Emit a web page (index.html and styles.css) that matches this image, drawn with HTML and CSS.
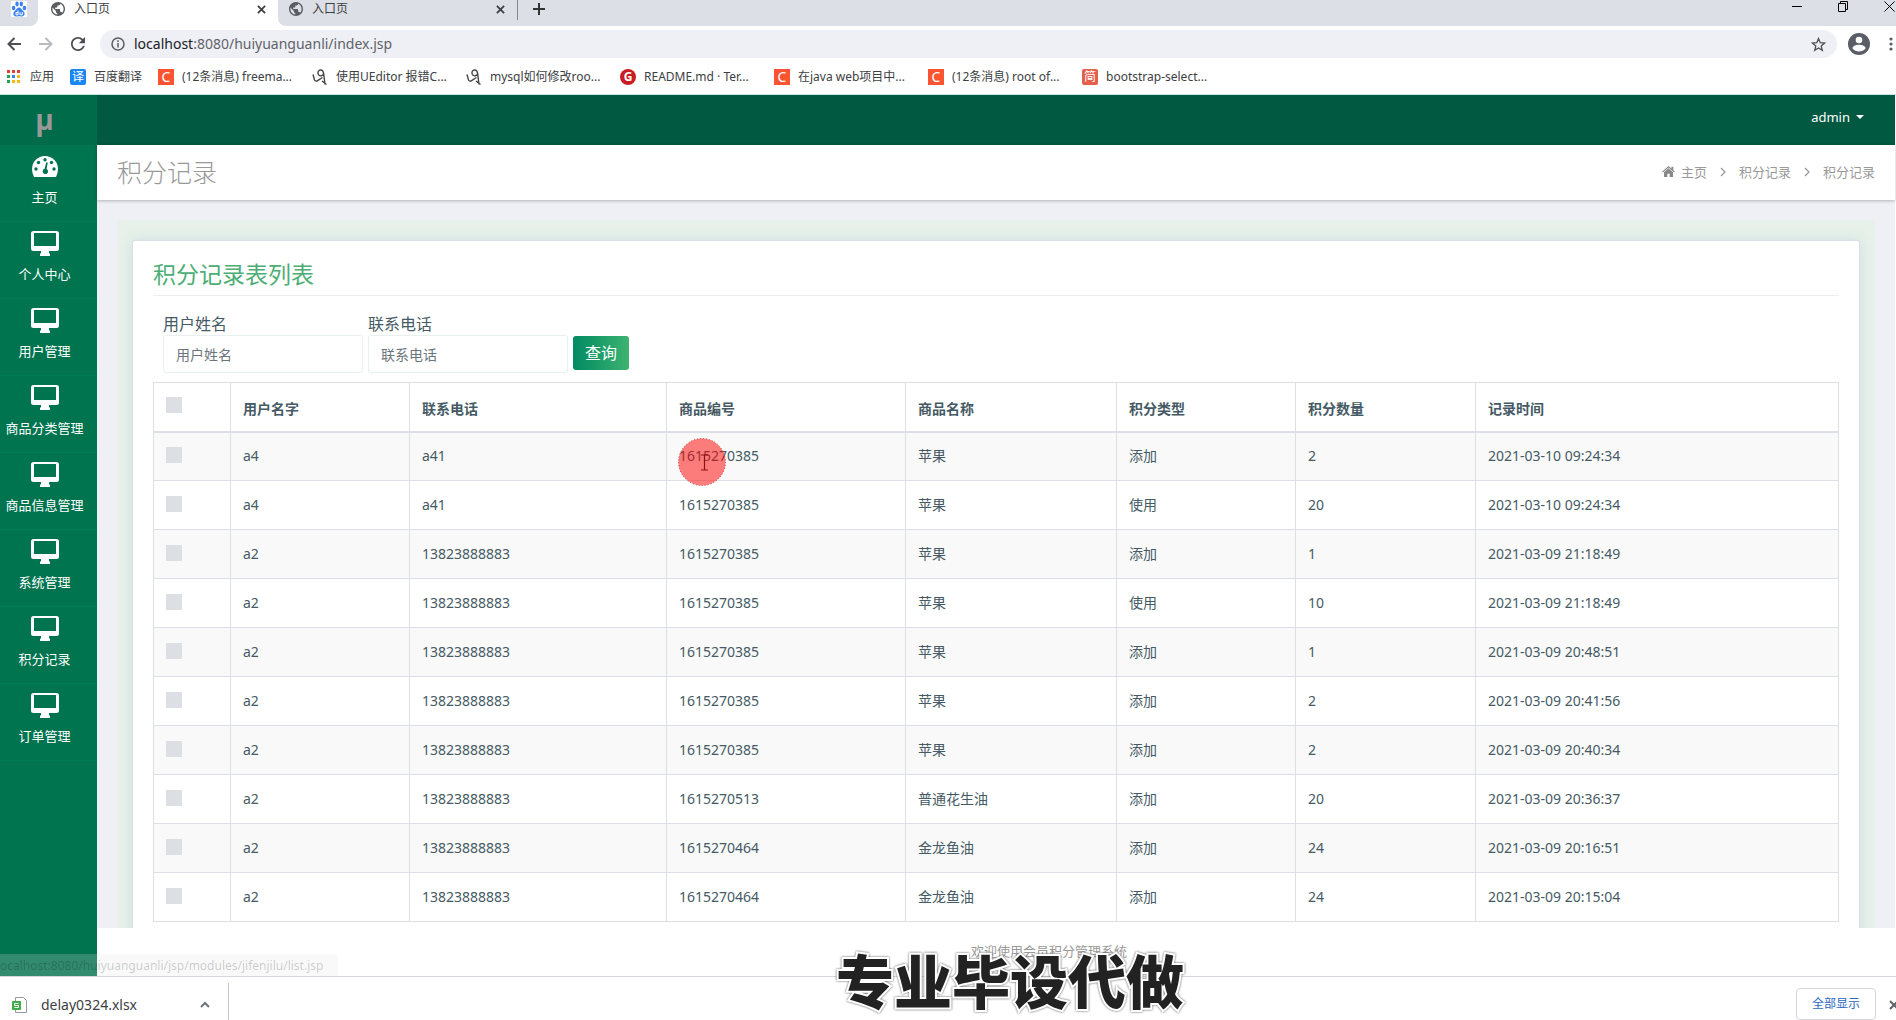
FILE: index.html
```html
<!DOCTYPE html>
<html lang="zh-CN">
<head>
<meta charset="utf-8">
<title>入口页</title>
<link rel="stylesheet" href="styles.css">
</head>
<body>
<svg class="defs" aria-hidden="true">
  <symbol id="globe" viewBox="2 2 20 20"><path fill="#5a5e63" d="M12 2C6.480 2 2 6.480 2 12s4.480 10 10 10 10-4.480 10-10S17.520 2 12 2zm-1 17.930c-3.950-.49-7-3.850-7-7.930 0-.62.080-1.210.21-1.790L9 15v1c0 1.100.9 2 2 2v1.930zm6.900-2.540c-.26-.81-1-1.390-1.900-1.390h-1v-3c0-.55-.45-1-1-1H8v-2h2c.55 0 1-.45 1-1V7h2c1.100 0 2-.9 2-2v-.41c2.930 1.190 5 4.060 5 7.410 0 2.080-.8 3.970-2.100 5.390z"/></symbol>
  <symbol id="close" viewBox="0 0 10 10"><path d="M1 1l8 8M9 1L1 9" fill="none" stroke="currentColor" stroke-width="2"/></symbol>
  <symbol id="monitor" viewBox="0 0 28 25"><path fill-rule="evenodd" d="M2.500 0h23A2.500 2.500 0 0 1 28 2.500v15a2.500 2.500 0 0 1-2.500 2.500H18v2.500h1V25H9v-2.500h1V20H2.500A2.500 2.500 0 0 1 0 17.500v-15A2.500 2.500 0 0 1 2.500 0ZM3 2v13h22V2Z" fill="#fff"/></symbol>
  <symbol id="ueditor" viewBox="0 0 16 17"><path d="M1 5.500l1.500 5.500q1 2 3.500.3L10.500 8.500M6.500 5.500c-1.500-2 0-4.500 2-4.500s3 1.500 3 4c0 1.500-4 3-5 .5M11.500 3.500L13 15.500M10 12l4.500 3.500" fill="none" stroke="#444" stroke-width="1.400"/></symbol>
  <symbol id="chevron" viewBox="0 0 6 10"><path d="M1 1l4 4-4 4" fill="none" stroke="#999" stroke-width="1.300"/></symbol>
</svg>

<header class="browser">
  <div class="tabs">
    <div class="tab pinned"><svg width="16" height="16" viewBox="0 0 16 16"><path d="M0 0h16v16H0z" fill="#fff"/><g fill="#3b82f0"><ellipse cx="2.600" cy="7" rx="1.800" ry="2.300"/><ellipse cx="6" cy="3" rx="1.700" ry="2.400"/><ellipse cx="10.300" cy="3" rx="1.700" ry="2.400"/><ellipse cx="13.500" cy="7" rx="1.800" ry="2.300"/><path d="M8 6.500c2 0 2.500 2 4 3.300 3 2.500 1.500 6-1.500 5.600-2-.3-3-.3-5 0-3 .4-4.500-3-1.500-5.600C5.500 8.500 6 6.500 8 6.500Z"/></g><path d="M7 9.500v4.300M7 11.500H5v2.300h2M9 11v2.800h2.300V11" fill="none" stroke="#fff"/></svg></div>
    <div class="tab active"><svg width="14" height="14"><use href="#globe"/></svg><span>入口页</span><button aria-label="关闭标签页"><svg width="9" height="9"><use href="#close"/></svg></button></div>
    <div class="tab idle"><svg width="14" height="14"><use href="#globe"/></svg><span>入口页</span><button aria-label="关闭标签页"><svg width="9" height="9"><use href="#close"/></svg></button></div>
    <button class="new-tab" aria-label="新标签页"><svg width="12" height="12"><path d="M6 0v12M0 6h12" stroke="#333" stroke-width="2"/></svg></button>
    <div class="window-buttons">
      <button aria-label="最小化"><svg width="10" height="11"><path d="M0 5.500h10" stroke="#000"/></svg></button>
      <button aria-label="还原"><svg width="10" height="11"><path d="M.5 2.500h7v8h-7zM2.500 2.500v-2h7v8h-2" fill="none" stroke="#000"/></svg></button>
      <button aria-label="关闭"><svg width="11" height="11"><path d="M.5.5l10 10M10.500.5l-10 10" stroke="#000"/></svg></button>
    </div>
  </div>
  <div class="toolbar">
    <nav class="nav-buttons">
      <button aria-label="后退"><svg width="14" height="14"><path d="M14 7H1.500M7.500 1l-6 6 6 6" fill="none" stroke="#4b4f54" stroke-width="2"/></svg></button>
      <button aria-label="前进"><svg width="14" height="14"><path d="M0 7h12.500M6.500 1l6 6-6 6" fill="none" stroke="#b9bbbf" stroke-width="2"/></svg></button>
      <button aria-label="刷新"><svg width="14" height="14" viewBox="4 4 16 16"><path fill="#4b4f54" d="M17.650 6.350C16.200 4.900 14.210 4 12 4c-4.420 0-7.990 3.580-7.990 8s3.570 8 7.990 8c3.730 0 6.840-2.550 7.730-6h-2.080c-.82 2.330-3.040 4-5.650 4-3.310 0-6-2.690-6-6s2.690-6 6-6c1.660 0 3.140.69 4.220 1.780L13 11h7V4l-2.350 2.350z"/></svg></button>
    </nav>
    <div class="omnibox">
      <svg width="14" height="14"><circle cx="7" cy="7" r="6" fill="none" stroke="#5a5e63" stroke-width="1.500"/><path d="M7 6v4.500M7 3.300v1.600" stroke="#5a5e63" stroke-width="1.500"/></svg>
      <span class="url"><b>localhost</b>:8080/huiyuanguanli/index.jsp</span>
      <svg width="15" height="15" viewBox="0 0 15 15"><path d="M7.500 1.500l1.700 4.200 4.500.3-3.500 2.900 1.100 4.400-3.800-2.400-3.800 2.400 1.100-4.400L1.300 6l4.500-.3z" fill="none" stroke="#4b4f54" stroke-width="1.300"/></svg>
    </div>
    <svg width="22" height="22"><circle cx="11" cy="11" r="11" fill="#5a5e66"/><circle cx="11" cy="7" r="3.300" fill="#fff"/><path d="M4.500 15.500c0-5 13-5 13 0-3 4-10 4-13 0z" fill="#fff"/></svg>
    <svg class="dots" width="4" height="14"><g fill="#5a5e63"><circle cx="2" cy="2" r="1.600"/><circle cx="2" cy="7" r="1.600"/><circle cx="2" cy="12" r="1.600"/></g></svg>
  </div>
  <nav class="bookmarks">
    <a class="apps" href="#"><svg width="14" height="14"><path d="M0 0h3v3H0zM5 0h3v3H5zM10 0h3v3h-3z" fill="#dd4337"/><path d="M0 5h3v3H0z" fill="#21a05c"/><path d="M5 5h3v3H5z" fill="#3b82f0"/><path d="M10 5h3v3h-3zM5 10h3v3H5zM10 10h3v3h-3z" fill="#f5b912"/><path d="M0 10h3v3H0z" fill="#21a05c"/></svg>应用</a>
    <a class="fanyi" href="#"><i class="fav blue">译</i>百度翻译</a>
    <a href="#"><i class="fav csdn">C</i>(12条消息) freema...</a>
    <a href="#"><svg width="16" height="17"><use href="#ueditor"/></svg>使用UEditor 报错C...</a>
    <a href="#"><svg width="16" height="17"><use href="#ueditor"/></svg>mysql如何修改roo...</a>
    <a href="#"><i class="fav gitee">G</i>README.md · Ter...</a>
    <a href="#"><i class="fav csdn">C</i>在java web项目中...</a>
    <a href="#"><i class="fav csdn">C</i>(12条消息) root of...</a>
    <a href="#"><i class="fav jian">简</i>bootstrap-select...</a>
  </nav>
</header>

<div class="app">
  <aside class="sidebar">
    <a class="logo" href="#">μ</a>
    <a class="item" href="#"><svg width="26" height="25" viewBox="0 0 26 21"><path d="M13 0A13 13 0 0 1 26 13q0 4.500-2 8H2Q0 17.500 0 13A13 13 0 0 1 13 0Z" fill="#fff"/><g fill="#00734f"><circle cx="4" cy="13" r="1.700"/><circle cx="6.500" cy="6.500" r="1.700"/><circle cx="13" cy="3.700" r="1.700"/><circle cx="19.500" cy="6.500" r="1.700"/><circle cx="22" cy="13" r="1.700"/><path d="M14.200 6.500h1.600L14.600 13a2.700 2.700 0 1 1-2-.2z"/></g></svg>主页</a>
    <a class="item" href="#"><svg width="28" height="25"><use href="#monitor"/></svg>个人中心</a>
    <a class="item" href="#"><svg width="28" height="25"><use href="#monitor"/></svg>用户管理</a>
    <a class="item" href="#"><svg width="28" height="25"><use href="#monitor"/></svg>商品分类管理</a>
    <a class="item" href="#"><svg width="28" height="25"><use href="#monitor"/></svg>商品信息管理</a>
    <a class="item" href="#"><svg width="28" height="25"><use href="#monitor"/></svg>系统管理</a>
    <a class="item" href="#"><svg width="28" height="25"><use href="#monitor"/></svg>积分记录</a>
    <a class="item" href="#"><svg width="28" height="25"><use href="#monitor"/></svg>订单管理</a>
  </aside>

  <div class="page">
    <div class="topbar"><button class="user">admin<span class="caret"></span></button></div>
    <div class="titlebar">
      <h1>积分记录</h1>
      <nav class="crumbs">
        <a href="#"><svg width="13" height="11" viewBox="0 0 13 11"><path d="M6.500 0L9.500 2.600V.8h1.800v3.400L13 5.700l-.8.9-5.700-5-5.700 5-.8-.9z M6.500 2.300L11 6.300V11H7.700V7.700H5.300V11H2V6.300z" fill="#888"/></svg>主页</a>
        <svg width="6" height="10"><use href="#chevron"/></svg>
        <a href="#">积分记录</a>
        <svg width="6" height="10"><use href="#chevron"/></svg>
        <span>积分记录</span>
      </nav>
    </div>
    <main class="content">
      <div class="panel">
        <section class="card">
          <h2>积分记录表列表</h2>
          <form class="search">
            <div class="field"><label for="name">用户姓名</label><input id="name" type="text" placeholder="用户姓名"></div>
            <div class="field"><label for="phone">联系电话</label><input id="phone" type="text" placeholder="联系电话"></div>
            <button type="button">查询</button>
          </form>
          <table>
            <colgroup><col class="c1"><col class="c2"><col class="c3"><col class="c4"><col class="c5"><col class="c6"><col class="c7"><col></colgroup>
            <thead><tr><th><input type="checkbox" aria-label="全选"></th><th>用户名字</th><th>联系电话</th><th>商品编号</th><th>商品名称</th><th>积分类型</th><th>积分数量</th><th>记录时间</th></tr></thead>
            <tbody>
              <tr><td><input type="checkbox" aria-label="选择"></td><td>a4</td><td>a41</td><td class="marked">1615270385<svg class="pointer" width="48" height="48"><path d="M23 17h7M26.500 17v15M23 32h7" stroke="#222" stroke-width="1.200" fill="none"/><circle cx="24" cy="24" r="23.500" fill="#f00" fill-opacity=".5"/><circle cx="24" cy="24" r="23.500" fill="none" stroke="#c33" stroke-dasharray="1 2"/></svg></td><td>苹果</td><td>添加</td><td>2</td><td>2021-03-10 09:24:34</td></tr>
              <tr><td><input type="checkbox" aria-label="选择"></td><td>a4</td><td>a41</td><td>1615270385</td><td>苹果</td><td>使用</td><td>20</td><td>2021-03-10 09:24:34</td></tr>
              <tr><td><input type="checkbox" aria-label="选择"></td><td>a2</td><td>13823888883</td><td>1615270385</td><td>苹果</td><td>添加</td><td>1</td><td>2021-03-09 21:18:49</td></tr>
              <tr><td><input type="checkbox" aria-label="选择"></td><td>a2</td><td>13823888883</td><td>1615270385</td><td>苹果</td><td>使用</td><td>10</td><td>2021-03-09 21:18:49</td></tr>
              <tr><td><input type="checkbox" aria-label="选择"></td><td>a2</td><td>13823888883</td><td>1615270385</td><td>苹果</td><td>添加</td><td>1</td><td>2021-03-09 20:48:51</td></tr>
              <tr><td><input type="checkbox" aria-label="选择"></td><td>a2</td><td>13823888883</td><td>1615270385</td><td>苹果</td><td>添加</td><td>2</td><td>2021-03-09 20:41:56</td></tr>
              <tr><td><input type="checkbox" aria-label="选择"></td><td>a2</td><td>13823888883</td><td>1615270385</td><td>苹果</td><td>添加</td><td>2</td><td>2021-03-09 20:40:34</td></tr>
              <tr><td><input type="checkbox" aria-label="选择"></td><td>a2</td><td>13823888883</td><td>1615270513</td><td>普通花生油</td><td>添加</td><td>20</td><td>2021-03-09 20:36:37</td></tr>
              <tr><td><input type="checkbox" aria-label="选择"></td><td>a2</td><td>13823888883</td><td>1615270464</td><td>金龙鱼油</td><td>添加</td><td>24</td><td>2021-03-09 20:16:51</td></tr>
              <tr><td><input type="checkbox" aria-label="选择"></td><td>a2</td><td>13823888883</td><td>1615270464</td><td>金龙鱼油</td><td>添加</td><td>24</td><td>2021-03-09 20:15:04</td></tr>
            </tbody>
          </table>
        </section>
      </div>
    </main>
    <footer>欢迎使用会员积分管理系统</footer>
  </div>
  <div class="status">ocalhost:8080/huiyuanguanli/jsp/modules/jifenjilu/list.jsp</div>
</div>

<div class="downloads">
  <div class="file">
    <svg width="16" height="16"><path d="M3.500.5h8l3 3v12h-11z" fill="#fff" stroke="#999"/><rect y="4" width="9" height="9" rx="1" fill="#3fae49"/><path d="M6.500 6.500h-4v2h4v2h-4" fill="none" stroke="#fff"/></svg>
    <span>delay0324.xlsx</span>
    <button aria-label="更多"><svg width="10" height="7"><path d="M1 6l4-4 4 4" fill="none" stroke="#70757a" stroke-width="2"/></svg></button>
  </div>
  <button class="show-all">全部显示</button>
  <button class="shut" aria-label="关闭"><svg width="10" height="10"><use href="#close"/></svg></button>
</div>
<div class="caption">专业毕设代做</div>
</body>
</html>
```
FILE: styles.css
```css
* { box-sizing: border-box; }
body {
  margin: 0;
  height: 100vh;
  display: flex;
  flex-direction: column;
  position: relative;
  overflow: hidden;
  background: #fff;
  color: #455a64;
  font: 14px/20px "Noto Sans", "Noto Sans CJK SC", sans-serif;
}
a { color: inherit; text-decoration: none; }
button { margin: 0; padding: 0; border: 0; background: none; color: inherit; font: inherit; }
svg { display: block; flex: none; }
.defs { position: absolute; width: 0; height: 0; }

/* Browser frame */
.browser { flex: none; color: #3c4043; font-size: 12px; border-bottom: 1px solid #bfe8dc; }
.tabs { display: flex; height: 26px; background: #fff; }
.tab { display: flex; align-items: center; height: 26px; padding-bottom: 8px; background: #dcdfe6; }
.tab span { flex: 1; }
.pinned { width: 38px; padding-left: 11px; border-radius: 0 0 8px 0; }
.active { width: 240px; padding: 0 12px 8px 13px; gap: 9px; background: #fff; }
.idle { width: 239px; padding: 0 12px 8px 11px; gap: 9px; border-radius: 0 0 0 8px; }
.new-tab { width: 100px; padding: 0 0 8px 16px; background: linear-gradient(#888, #888) 0 0 / 1px 20px no-repeat #dcdfe6; }
.window-buttons { flex: 1; display: flex; justify-content: flex-end; gap: 36px; padding: 1px 1px 0 0; background: #dcdfe6; }
.window-buttons button { height: 11px; }
.toolbar { display: flex; align-items: center; height: 36px; gap: 11px; padding: 0 3px 0 7px; }
.nav-buttons { display: flex; align-items: center; gap: 18px; width: 82px; }
.omnibox { flex: 1; display: flex; align-items: center; gap: 9px; height: 28px; padding: 0 11px; border-radius: 14px; background: #eff0f5; }
.url { flex: 1; color: #5f6368; font-size: 14px; }
.url b { font-weight: 400; color: #202124; }
.dots { margin-left: 8px; }
.bookmarks { display: flex; align-items: center; height: 32px; padding: 0 0 2px 7px; }
.bookmarks a { display: flex; align-items: center; gap: 8px; width: 154px; white-space: nowrap; }
.bookmarks .apps { width: 63px; gap: 9px; }
.bookmarks .fanyi { width: 88px; }
.fav { width: 16px; height: 16px; color: #fff; font-style: normal; font-size: 14px; line-height: 16px; text-align: center; }
.blue { background: #1a86f2; border-radius: 2px; font-size: 12px; }
.csdn { background: #fa5432; }
.gitee { background: #c71d23; border-radius: 8px; font-size: 12px; font-weight: 700; }
.jian { background: #e2604b; border-radius: 2px; font-size: 12px; }

/* Application */
.app { flex: 1; min-height: 0; display: flex; position: relative; margin-right: 1px; }
.sidebar { flex: none; width: 97px; background: #00734f; color: #fff; font-size: 13px; }
.logo { display: block; height: 50px; padding-right: 8px; background: #006b49; color: #999; font: 700 28px/48px "Open Sans", sans-serif; text-align: center; }
.item { display: flex; flex-direction: column; align-items: center; gap: 8px; height: 77px; padding: 9px 8px 0 0; border-bottom: 1px solid #007d57; white-space: nowrap; }
.page { flex: 1; min-width: 0; display: flex; flex-direction: column; }
.topbar { flex: none; display: flex; justify-content: flex-end; height: 50px; padding: 0 31px 6px 0; background: #005940; color: #fff; font-size: 13px; }
.user { display: flex; align-items: center; gap: 6px; }
.caret { border: 4px solid transparent; border-top-color: #fff; border-bottom: 0; }
.titlebar { flex: none; display: flex; align-items: center; justify-content: space-between; height: 55px; padding: 0 20px 2px; background: #fff; box-shadow: 0 1px 3px rgba(0,0,0,.25); z-index: 1; }
h1 { margin: 0; font-size: 25px; line-height: 36px; font-weight: 300; color: #999; }
.crumbs { display: flex; align-items: center; gap: 13px; font-size: 13px; color: #999; }
.crumbs a { display: flex; align-items: center; gap: 6px; }
.content { flex: 1; min-height: 0; overflow: hidden; padding: 20px 20px 0; background: #eff0f6; }
.panel { padding: 20px 15px; background: #e7f1ea; }
.card { padding: 19px 20px 20px; background: #fff; border: 1px solid #dadfe6; border-radius: 3px; box-shadow: 0 0 13px rgba(62,130,180,.15); }
h2 { margin: 0 0 17px; padding-bottom: 6px; border-bottom: 1px solid #eceeef; color: #4dae75; font-size: 23px; line-height: 29px; font-weight: 400; }
.search { display: flex; align-items: flex-end; gap: 5px; margin-bottom: 9px; padding-left: 10px; }
.field { width: 200px; display: flex; flex-direction: column; }
.field label { font-size: 16px; line-height: 22px; }
.field input { height: 38px; padding: 0 12px; border: 1px solid #e8efef; border-radius: 3px; font: inherit; color: inherit; }
.field input::placeholder { color: #6c757d; opacity: 1; }
.search button { width: 56px; height: 34px; margin-bottom: 3px; border-radius: 3px; background: linear-gradient(90deg, #008a62, #3cb371); color: #fff; font-size: 16px; }
table { width: 100%; table-layout: fixed; border-collapse: collapse; }
th, td { height: 49px; padding: 0 12px; border: 1px solid #dcdfe6; text-align: left; vertical-align: middle; }
th { padding-top: 4px; border-bottom-width: 2px; font-weight: 700; }
tbody tr:nth-child(odd) { background: #f9f9f9; }
.c1 { width: 77px; } .c2, .c6 { width: 179px; } .c3 { width: 257px; } .c4 { width: 239px; } .c5 { width: 211px; } .c7 { width: 180px; }
table input { appearance: none; display: block; width: 16px; height: 16px; margin: 0 0 3px; background: #dcdfe4; }
th input { margin-bottom: 7px; }
.marked { position: relative; }
.pointer { position: absolute; left: 11px; top: 5px; }
footer { flex: none; height: 48px; padding-left: 106px; background: #fff; color: #999; font-size: 13px; line-height: 46px; text-align: center; }
.status { position: absolute; left: 0; bottom: 0; width: 338px; height: 22px; border-radius: 0 4px 0 0; background: rgba(228,228,228,.22); color: rgba(0,0,0,.2); font-size: 12px; line-height: 24px; white-space: nowrap; }

/* Download shelf */
.downloads { flex: none; display: flex; align-items: flex-start; height: 44px; padding-top: 6px; border-top: 1px solid #d5d7dc; overflow: hidden; }
.file { display: flex; align-items: center; width: 229px; height: 43px; padding: 0 18px 0 12px; gap: 13px; border-right: 1px solid #c4c6ca; color: #3c4043; }
.file span { flex: 1; }
.show-all { width: 80px; height: 32px; margin: 5px 13px 0 auto; border: 1px solid #d5d7dc; border-radius: 4px; color: #2b67c0; font-size: 12px; }
.shut { color: #5f6368; width: 7px; height: 43px; overflow: hidden; }

.caption {
  position: absolute;
  left: 836px;
  bottom: 1px;
  color: #222;
  font: 900 58px/80px "Noto Sans CJK SC", sans-serif;
  -webkit-text-stroke: 4px #fff;
  paint-order: stroke fill;
  filter: drop-shadow(0 0 1px #555);
}
```
